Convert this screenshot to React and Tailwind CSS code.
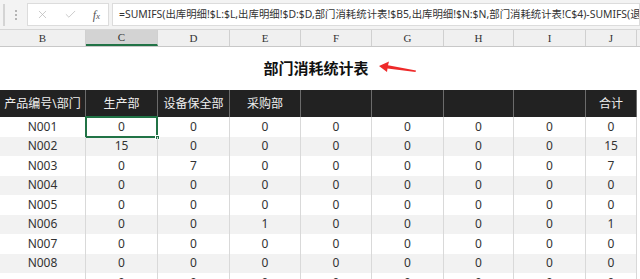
import { X, Check } from 'lucide-react';

const COLS = [
  { key: 'B', w: 'w-[86px]' },
  { key: 'C', w: 'w-[72px]' },
  { key: 'D', w: 'w-[72px]' },
  { key: 'E', w: 'w-[71px]' },
  { key: 'F', w: 'w-[71px]' },
  { key: 'G', w: 'w-[72px]' },
  { key: 'H', w: 'w-[70px]' },
  { key: 'I', w: 'w-[72px]' },
  { key: 'J', w: 'w-[51px]' },
];

const HEADERS = ['产品编号\\部门', '生产部', '设备保全部', '采购部', '', '', '', '', '合计'];

const ROWS = [
  ['N001', 0, 0, 0, 0, 0, 0, 0, 0],
  ['N002', 15, 0, 0, 0, 0, 0, 0, 15],
  ['N003', 0, 7, 0, 0, 0, 0, 0, 7],
  ['N004', 0, 0, 0, 0, 0, 0, 0, 0],
  ['N005', 0, 0, 0, 0, 0, 0, 0, 0],
  ['N006', 0, 0, 1, 0, 0, 0, 0, 1],
  ['N007', 0, 0, 0, 0, 0, 0, 0, 0],
  ['N008', 0, 0, 0, 0, 0, 0, 0, 0],
  ['', 0, 0, 0, 0, 0, 0, 0, 0],
];

const FORMULA = '=SUMIFS(出库明细!$L:$L,出库明细!$D:$D,部门消耗统计表!$B5,出库明细!$N:$N,部门消耗统计表!C$4)-SUMIFS(退';

export default function App() {
  return (
    <div className="w-[640px] h-[279px] overflow-hidden bg-white text-[#222]" style={{ fontFamily: '"Noto Sans", "Noto Sans CJK SC", sans-serif' }}>
      {/* formula bar */}
      <div className="flex items-center h-[30px] bg-[#f3f3f3] border-b border-[#d6d6d6] pl-[3px] gap-[3px]">
        <div className="w-[2px] h-[22px] bg-[#d4d4d4]" />
        <div className="flex flex-col gap-[2px] w-[16px] items-center">
          <span className="w-[2px] h-[2px] bg-[#b5b5b5]" />
          <span className="w-[2px] h-[2px] bg-[#b5b5b5]" />
          <span className="w-[2px] h-[2px] bg-[#b5b5b5]" />
        </div>
        <div className="flex items-center h-[23px] w-[82px] bg-white border border-[#dcdcdc] px-[8px] justify-between">
          <X size={13} strokeWidth={1.3} className="text-[#b5b5b5]" />
          <Check size={13} strokeWidth={1.3} className="text-[#b5b5b5]" />
          <span className="text-[12px] italic text-[#555]" style={{ fontFamily: '"Liberation Serif", serif' }}>f<span className="text-[9px]">x</span></span>
        </div>
        <div className="flex-1 flex items-center h-[23px] bg-white border border-[#dcdcdc] pl-[6px] overflow-hidden">
          <span className="whitespace-nowrap text-[10.4px] text-[#333]">{FORMULA}</span>
        </div>
      </div>

      {/* column letters */}
      <div className="flex h-[17px] bg-[#f0f0f0] border-b border-[#c8c8c8]">
        {COLS.map((c) => (
          <div key={c.key} className={`${c.w} flex items-center justify-center border-r border-[#d0d0d0] text-[11px] text-[#333] ${c.key === 'C' ? 'bg-[#d3d3d3] border-b-2 border-b-[#217346]' : ''}`} style={{ fontFamily: '"Liberation Serif", serif' }}>
            {c.key}
          </div>
        ))}
        <div className="flex-1" />
      </div>

      {/* title */}
      <div className="relative h-[43px] flex items-center justify-center">
        <span className="text-[15px] font-bold text-[#111] ml-[-8px]" style={{ fontFamily: '"Noto Sans CJK SC", sans-serif' }}>部门消耗统计表</span>
        <svg className="absolute left-[378px] top-[14px]" width="40" height="14" viewBox="0 0 40 14">
          <path d="M1 5 L11 0.5 L10 4.2 L38 9.5 L37.5 11 L9.5 7.6 L9 11 Z" fill="#ee2a2a" />
        </svg>
      </div>

      {/* dark header */}
      <div className="flex h-[27px] bg-[#222]">
        {COLS.map((c, i) => (
          <div key={c.key} className={`${c.w} flex items-center justify-center border-r border-[#6b6b6b] text-[12px] text-[#eee]`}>
            {HEADERS[i]}
          </div>
        ))}
        <div className="flex-1 bg-white" />
      </div>

      {/* data rows */}
      {ROWS.map((row, r) => (
        <div key={r} className={`flex h-[19.5px] ${r % 2 === 1 ? 'bg-[#f2f2f2]' : 'bg-white'}`}>
          {COLS.map((c, i) => (
            <div key={c.key} className={`${c.w} relative flex items-center justify-center border-r border-[#d9d9d9] text-[12px] text-[#333]`}>
              {row[i]}
              {r === 0 && i === 1 && (
                <>
                  <div className="absolute inset-[-1px] border-2 border-[#217346]" />
                  <div className="absolute right-[-3px] bottom-[-3px] w-[5px] h-[5px] bg-[#217346] border border-white" />
                </>
              )}
            </div>
          ))}
          <div className="flex-1 bg-white" />
        </div>
      ))}
    </div>
  );
}
